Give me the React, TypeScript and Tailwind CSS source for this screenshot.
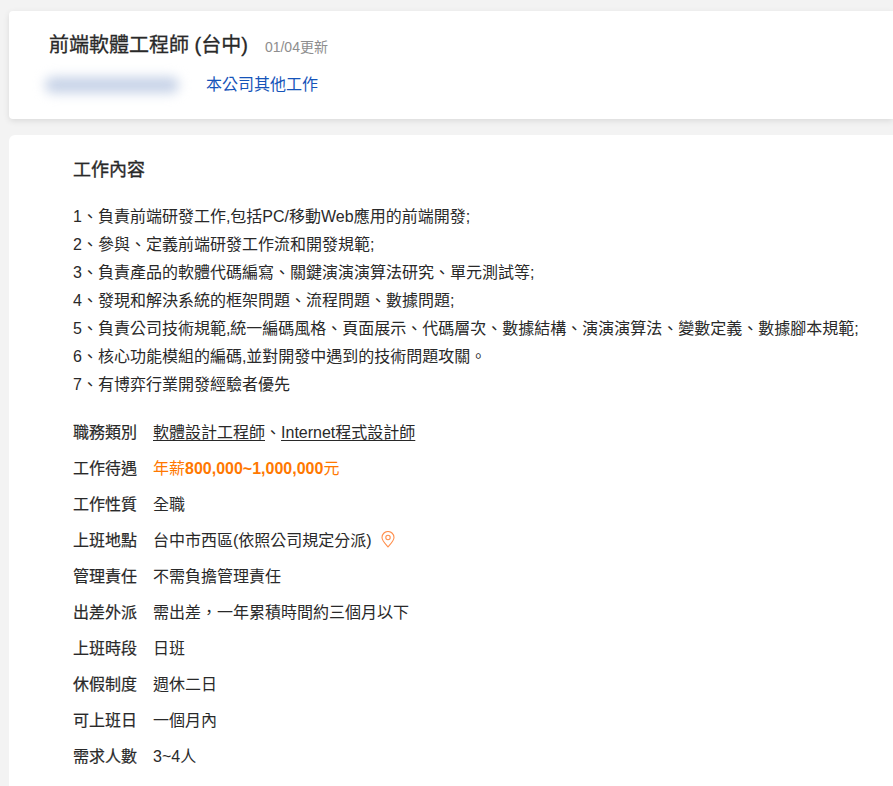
const FONT = "font-['Liberation_Sans','Noto_Sans_CJK_TC',sans-serif]";

const DUTIES = [
  "1、負責前端研發工作,包括PC/移動Web應用的前端開發;",
  "2、參與、定義前端研發工作流和開發規範;",
  "3、負責產品的軟體代碼編寫、關鍵演演演算法研究、單元測試等;",
  "4、發現和解決系統的框架問題、流程問題、數據問題;",
  "5、負責公司技術規範,統一編碼風格、頁面展示、代碼層次、數據結構、演演演算法、變數定義、數據腳本規範;",
  "6、核心功能模組的編碼,並對開發中遇到的技術問題攻關。",
  "7、有博弈行業開發經驗者優先",
];

function Row({ label, children }: { label: string; children: React.ReactNode }) {
  return (
    <div className="flex h-9 items-center">
      <div className="w-20 shrink-0 text-[#292929] [-webkit-text-stroke:0.2px_#292929]">{label}</div>
      <div className="flex items-center text-[#292929]">{children}</div>
    </div>
  );
}

export default function App() {
  return (
    <div className={`${FONT} h-[786px] w-[893px] overflow-hidden bg-[#f3f3f3] pl-[9px] pt-[11px] text-[16px]`}>
      <div className="h-[108px] w-[884px] rounded-l-[4px] bg-white pl-10 pt-5 shadow-[0_2px_6px_rgba(0,0,0,0.1)]">
        <div className="flex items-baseline">
          <h1 className="text-[20px] font-normal leading-[28px] text-[#292929] [-webkit-text-stroke:0.3px_#292929]">
            前端軟體工程師 (台中)
          </h1>
          <span className="ml-[17px] text-[14px] text-[#8e8e8e]">01/04更新</span>
        </div>
        <div className="mt-[14px] flex h-6 items-center">
          <div className="ml-[-4px] h-[16px] w-[134px] rounded-full bg-[#c6d2e7] blur-[6px]" />
          <a className="ml-[27px] text-[#1654b9]">本公司其他工作</a>
        </div>
      </div>

      <div className="mt-4 h-[700px] w-[884px] rounded-tl-[6px] bg-white pl-16 pt-[23px]">
        <h2 className="text-[18px] font-normal leading-6 text-[#292929] [-webkit-text-stroke:0.35px_#292929]">工作內容</h2>
        <div className="mt-[21px] whitespace-nowrap leading-7 text-[#292929]">
          {DUTIES.map((d) => (
            <div key={d}>{d}</div>
          ))}
        </div>
        <div className="mt-[16px]">
          <Row label="職務類別">
            <span className="underline underline-offset-2">軟體設計工程師</span>
            <span>、</span>
            <span className="underline underline-offset-2">Internet程式設計師</span>
          </Row>
          <Row label="工作待遇">
            <span className="text-[#ff7800]">
              年薪<b className="font-bold">800,000~1,000,000</b>元
            </span>
          </Row>
          <Row label="工作性質">全職</Row>
          <Row label="上班地點">
            台中市西區(依照公司規定分派)
            <svg className="mb-[3px] ml-[9px]" width="14" height="17" viewBox="0 0 14 17" fill="none" stroke="#ff8f4d" strokeWidth="1.1">
              <path d="M7 16 C4 12.5 1 9.5 1 6.5 A6 6 0 0 1 13 6.5 C13 9.5 10 12.5 7 16 Z" />
              <circle cx="7" cy="6.5" r="2.2" />
            </svg>
          </Row>
          <Row label="管理責任">不需負擔管理責任</Row>
          <Row label="出差外派">需出差，一年累積時間約三個月以下</Row>
          <Row label="上班時段">日班</Row>
          <Row label="休假制度">週休二日</Row>
          <Row label="可上班日">一個月內</Row>
          <Row label="需求人數">3~4人</Row>
        </div>
      </div>
    </div>
  );
}
